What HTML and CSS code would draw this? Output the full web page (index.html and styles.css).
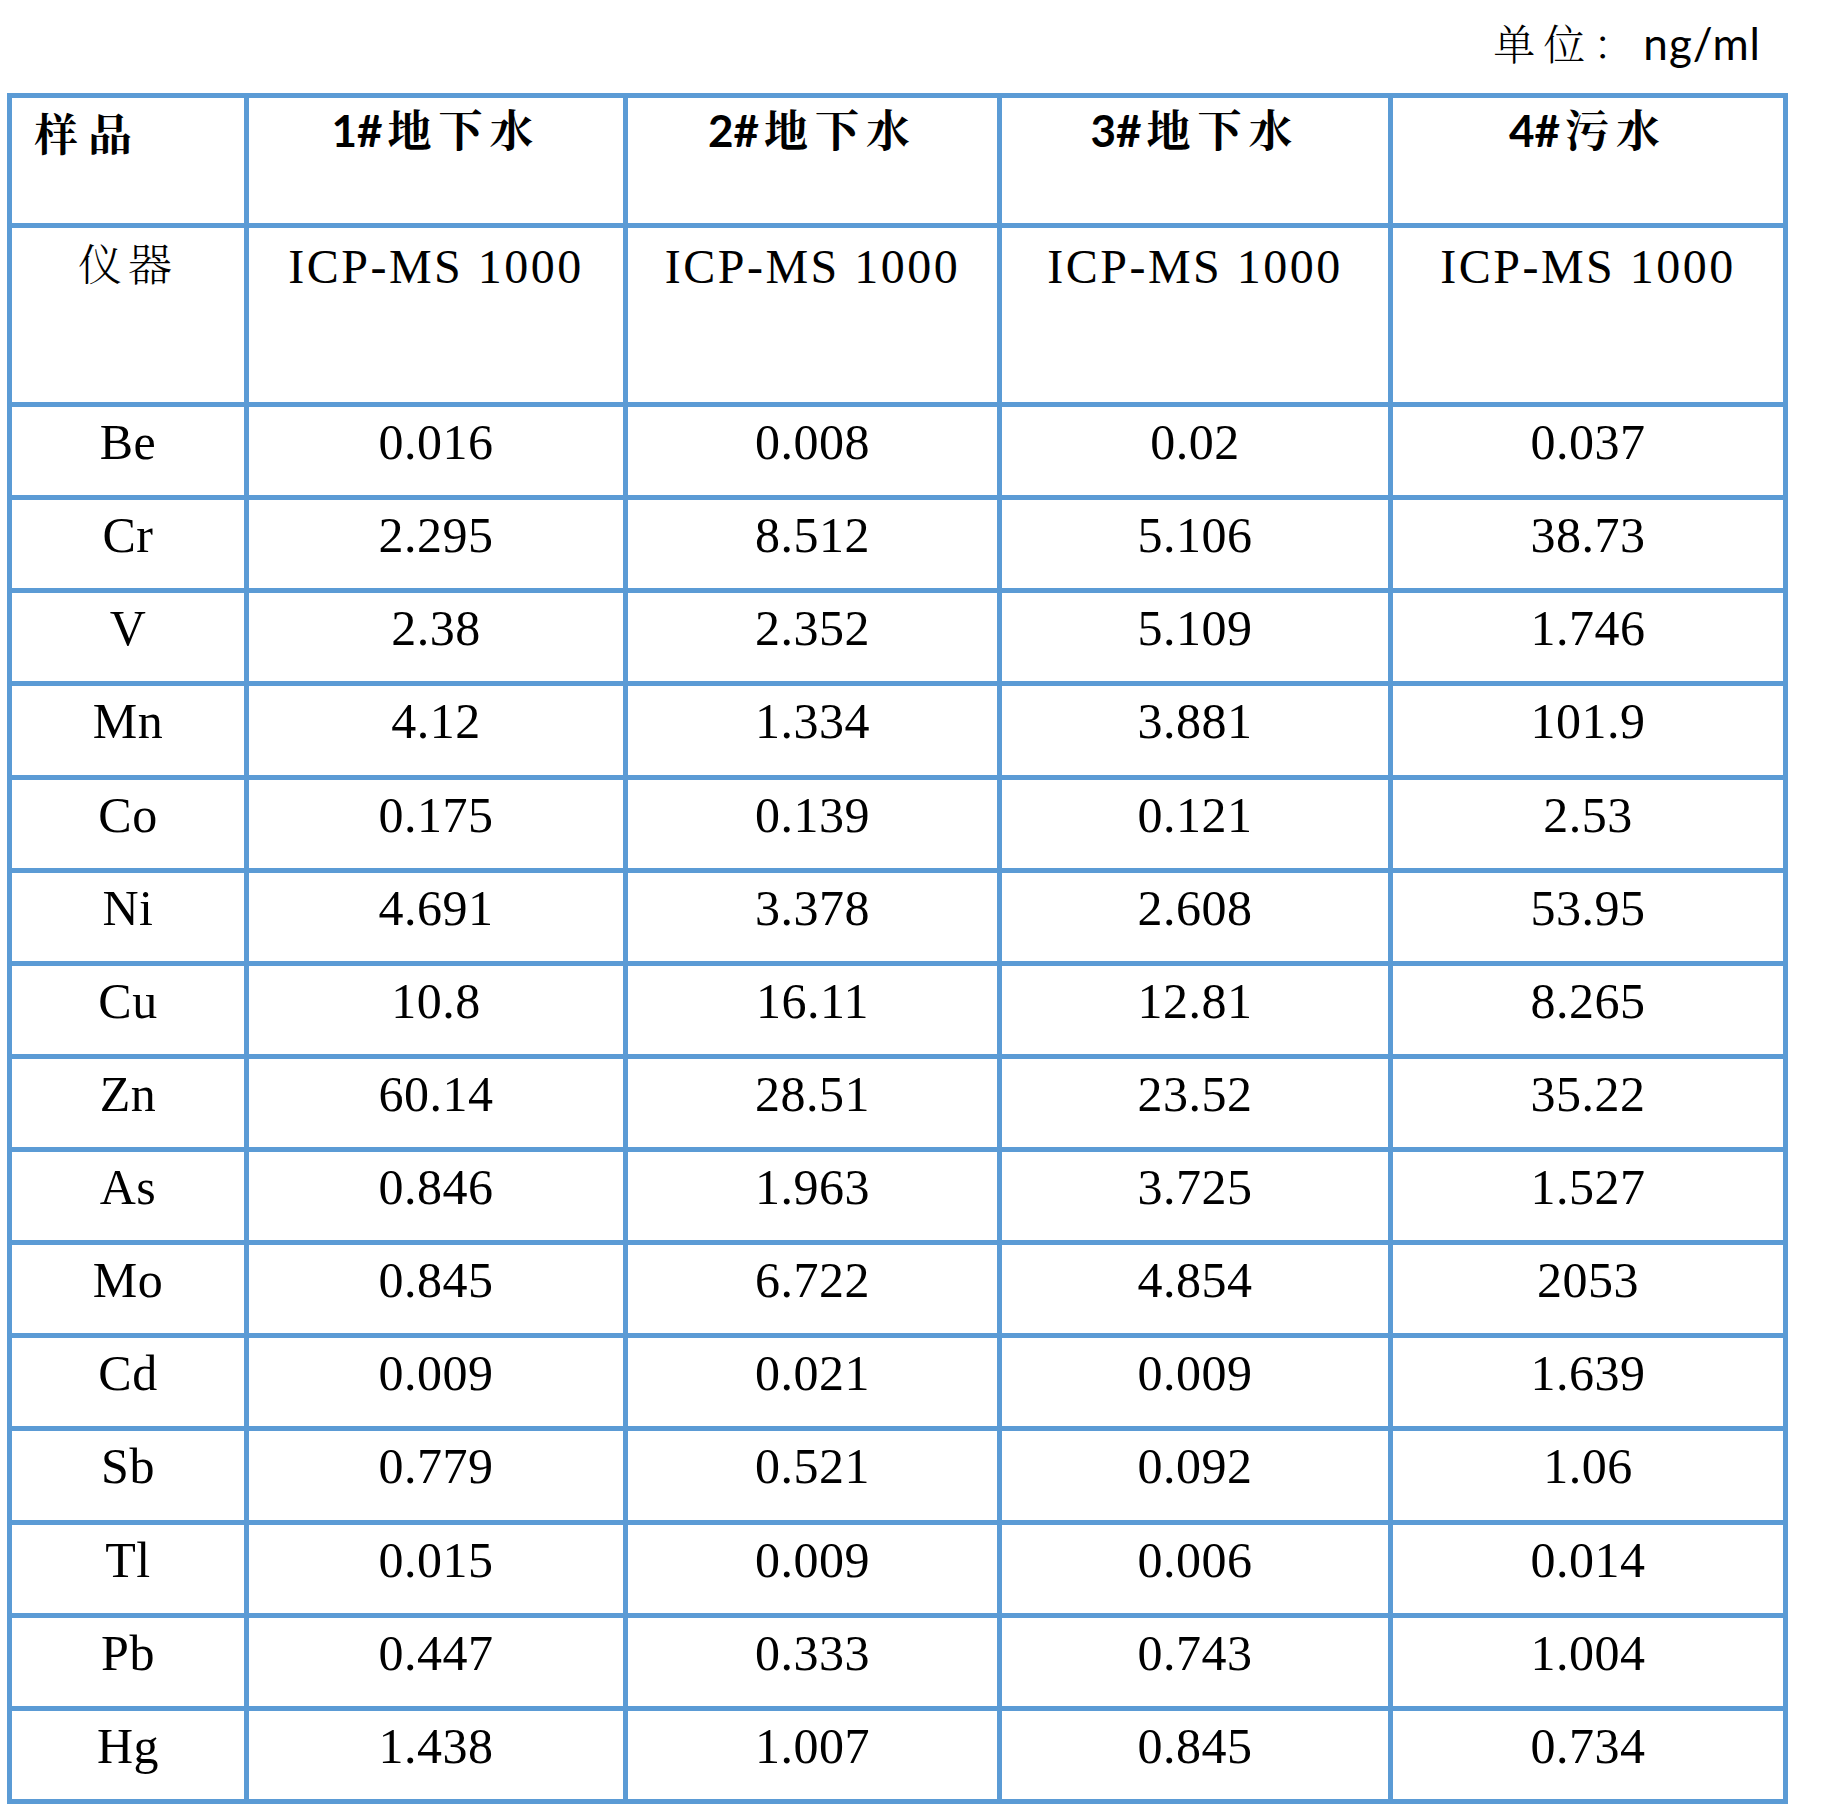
FILE: index.html
```html
<!DOCTYPE html>
<html lang="zh-CN">
<head>
<meta charset="utf-8">
<title>检测结果</title>
<link rel="stylesheet" href="styles.css">
</head>
<body>
<div class="page">
  <div class="unit"><span class="unit-cjk">单位：</span><span class="unit-en">ng/ml</span></div>
  <div class="grid">
    <div class="cell head head-first">样品</div>
    <div class="cell head"><span class="num">1#</span>地下水</div>
    <div class="cell head"><span class="num">2#</span>地下水</div>
    <div class="cell head"><span class="num">3#</span>地下水</div>
    <div class="cell head"><span class="num">4#</span>污水</div>

    <div class="cell inst-label">仪器</div>
    <div class="cell inst">ICP-MS 1000</div>
    <div class="cell inst">ICP-MS 1000</div>
    <div class="cell inst">ICP-MS 1000</div>
    <div class="cell inst">ICP-MS 1000</div>

    <div class="cell data">Be</div><div class="cell data">0.016</div><div class="cell data">0.008</div><div class="cell data">0.02</div><div class="cell data">0.037</div>
    <div class="cell data">Cr</div><div class="cell data">2.295</div><div class="cell data">8.512</div><div class="cell data">5.106</div><div class="cell data">38.73</div>
    <div class="cell data">V</div><div class="cell data">2.38</div><div class="cell data">2.352</div><div class="cell data">5.109</div><div class="cell data">1.746</div>
    <div class="cell data">Mn</div><div class="cell data">4.12</div><div class="cell data">1.334</div><div class="cell data">3.881</div><div class="cell data">101.9</div>
    <div class="cell data">Co</div><div class="cell data">0.175</div><div class="cell data">0.139</div><div class="cell data">0.121</div><div class="cell data">2.53</div>
    <div class="cell data">Ni</div><div class="cell data">4.691</div><div class="cell data">3.378</div><div class="cell data">2.608</div><div class="cell data">53.95</div>
    <div class="cell data">Cu</div><div class="cell data">10.8</div><div class="cell data">16.11</div><div class="cell data">12.81</div><div class="cell data">8.265</div>
    <div class="cell data">Zn</div><div class="cell data">60.14</div><div class="cell data">28.51</div><div class="cell data">23.52</div><div class="cell data">35.22</div>
    <div class="cell data">As</div><div class="cell data">0.846</div><div class="cell data">1.963</div><div class="cell data">3.725</div><div class="cell data">1.527</div>
    <div class="cell data">Mo</div><div class="cell data">0.845</div><div class="cell data">6.722</div><div class="cell data">4.854</div><div class="cell data">2053</div>
    <div class="cell data">Cd</div><div class="cell data">0.009</div><div class="cell data">0.021</div><div class="cell data">0.009</div><div class="cell data">1.639</div>
    <div class="cell data">Sb</div><div class="cell data">0.779</div><div class="cell data">0.521</div><div class="cell data">0.092</div><div class="cell data">1.06</div>
    <div class="cell data">Tl</div><div class="cell data">0.015</div><div class="cell data">0.009</div><div class="cell data">0.006</div><div class="cell data">0.014</div>
    <div class="cell data">Pb</div><div class="cell data">0.447</div><div class="cell data">0.333</div><div class="cell data">0.743</div><div class="cell data">1.004</div>
    <div class="cell data">Hg</div><div class="cell data">1.438</div><div class="cell data">1.007</div><div class="cell data">0.845</div><div class="cell data">0.734</div>
  </div>
</div>
</body>
</html>
```
FILE: styles.css
```css
html, body {
  margin: 0;
  padding: 0;
  background: #ffffff;
  color: #000000;
}

.page {
  padding: 0 0 0 7px;
  width: 1820px;
}

.unit {
  height: 93px;
  box-sizing: border-box;
  padding: 16px 66px 0 0;
  display: flex;
  justify-content: flex-end;
  align-items: baseline;
  line-height: 52px;
}

.unit-cjk {
  font-family: "Noto Serif CJK SC", "Noto Sans CJK SC", sans-serif;
  font-weight: 300;
  font-size: 42px;
  letter-spacing: 8px;
}

.unit-en {
  font-family: "Lato", "Open Sans", sans-serif;
  font-size: 44px;
  letter-spacing: 1px;
}

.grid {
  display: grid;
  grid-template-columns: 232px 374px 369px 386px 390px;
  grid-template-rows: 125px 174px repeat(15, 88.14px);
  gap: 5px;
  padding: 5px;
  background: #5b9bd5;
  width: max-content;
}

.cell {
  background: #ffffff;
  text-align: center;
  white-space: nowrap;
  overflow: hidden;
}

.head {
  font-family: "Lato", "Noto Serif CJK SC", "Noto Sans CJK SC", sans-serif;
  font-weight: 700;
  font-size: 44px;
  line-height: 56px;
  letter-spacing: 7px;
  padding-top: 4px;
}

.num {
  letter-spacing: 0;
  margin-right: 5px;
}

.head-first {
  text-align: left;
  padding-left: 22px;
  padding-top: 8px;
  letter-spacing: 10px;
}

.inst-label {
  font-family: "Noto Serif CJK SC", "Noto Sans CJK SC", sans-serif;
  font-weight: 300;
  font-size: 44px;
  line-height: 58px;
  letter-spacing: 6px;
  padding-top: 5px;
}

.inst {
  font-family: "Liberation Serif", "Times New Roman", serif;
  font-size: 48px;
  line-height: 58px;
  letter-spacing: 2.5px;
  padding-top: 10px;
}

.data {
  font-family: "Liberation Serif", "Times New Roman", serif;
  font-size: 50px;
  line-height: 60px;
  letter-spacing: 0.5px;
  padding-top: 5px;
}
```
